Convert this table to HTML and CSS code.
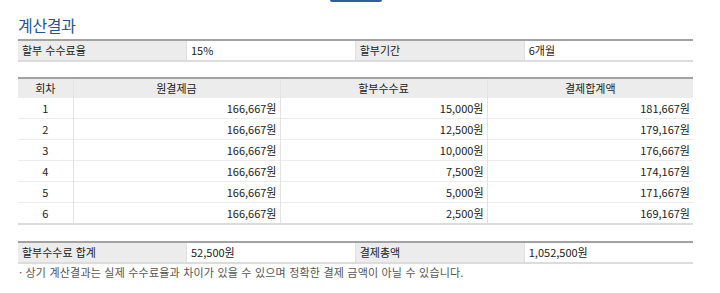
FILE: index.html
```html
<!DOCTYPE html>
<html lang="ko">
<head>
<meta charset="utf-8">
<link rel="stylesheet" href="styles.css">
</head>
<body>
<div class="topbar"></div>
<div class="wrap">
  <h2 class="title">계산결과</h2>
  <table class="info">
    <tr>
      <th>할부 수수료율</th><td>15%</td>
      <th>할부기간</th><td>6개월</td>
    </tr>
  </table>
  <table class="sched">
    <colgroup><col class="c1"><col class="c2"><col class="c3"><col class="c4"></colgroup>
    <thead>
      <tr><th>회차</th><th>원결제금</th><th>할부수수료</th><th>결제합계액</th></tr>
    </thead>
    <tbody>
      <tr><td class="n">1</td><td>166,667원</td><td>15,000원</td><td>181,667원</td></tr>
      <tr><td class="n">2</td><td>166,667원</td><td>12,500원</td><td>179,167원</td></tr>
      <tr><td class="n">3</td><td>166,667원</td><td>10,000원</td><td>176,667원</td></tr>
      <tr><td class="n">4</td><td>166,667원</td><td>7,500원</td><td>174,167원</td></tr>
      <tr><td class="n">5</td><td>166,667원</td><td>5,000원</td><td>171,667원</td></tr>
      <tr><td class="n">6</td><td>166,667원</td><td>2,500원</td><td>169,167원</td></tr>
    </tbody>
  </table>
  <table class="info total">
    <tr>
      <th>할부수수료 합계</th><td>52,500원</td>
      <th>결제총액</th><td>1,052,500원</td>
    </tr>
  </table>
  <p class="note">· 상기 계산결과는 실제 수수료율과 차이가 있을 수 있으며 정확한 결제 금액이 아닐 수 있습니다.</p>
</div>
</body>
</html>
```
FILE: styles.css
```css
html, body {
  margin: 0;
  padding: 0;
  background: #fff;
}
body {
  font-family: "Noto Sans CJK KR", "Noto Sans", sans-serif;
  font-size: 11px;
  color: #222;
  width: 720px;
  height: 293px;
  overflow: hidden;
  position: relative;
}
.topbar {
  position: absolute;
  left: 330px;
  top: 0;
  width: 52px;
  height: 2px;
  background: #2f5f9f;
  border-radius: 0 0 2px 2px;
}
.wrap {
  padding: 15px 27px 0 18px;
}
.title {
  margin: 0;
  font-size: 16px;
  font-weight: normal;
  color: #235595;
  line-height: 20px;
  height: 24px;
  letter-spacing: -0.3px;
}
table {
  border-collapse: collapse;
  width: 675px;
  table-layout: fixed;
}
.info {
  border-top: 2px solid #a2a2a2;
  border-bottom: 2px solid #dcdcdc;
  margin-top: 0;
}
.info th, .info td {
  height: 19px;
  padding: 0 0 0 4px;
  text-align: left;
  font-weight: normal;
  line-height: 19px;
  vertical-align: middle;
}
.info th {
  background: #ececec;
  width: 164px;
}
.info td {
  background: #fff;
  border-left: 1px solid #e0e0e0;
  border-right: 1px solid #e0e0e0;
}
.info td:last-child { border-right: none; }
.sched {
  margin-top: 15px;
  border-top: 2px solid #a2a2a2;
  border-bottom: 2px solid #dcdcdc;
}
.c1 { width: 55px; }
.c2 { width: 207px; }
.c3 { width: 207px; }
.c4 { width: 206px; }
.sched th {
  background: #ececec;
  font-weight: normal;
  height: 19px;
  line-height: 19px;
  padding: 0;
  border-left: 1px solid #e3e3e3;
}
.sched th:first-child, .sched td:first-child { border-left: none; }
.sched td {
  height: 20px;
  line-height: 20px;
  padding: 0 3px 0 0;
  text-align: right;
  border-left: 1px solid #e3e3e3;
  border-top: 1px solid #ececec;
}
.sched tbody tr:first-child td { border-top: none; }
.sched td.n {
  text-align: center;
  padding: 0;
}
.total {
  margin-top: 16px;
}
.note {
  margin: 0 0 0 1px;
  color: #555;
  font-size: 11px;
  line-height: 16px;
  letter-spacing: 0.2px;
}
```
